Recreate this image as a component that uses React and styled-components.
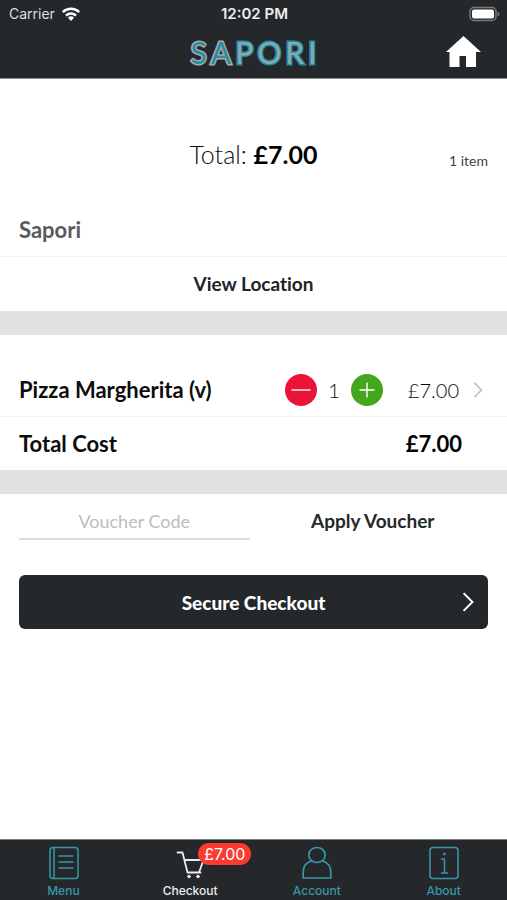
import React, { useState } from "react";
import styled, { createGlobalStyle } from "styled-components";

const ink = "#24282b";
const teal = "#3a95aa";

const GlobalStyle = createGlobalStyle`
  *, *::before, *::after { box-sizing: border-box; }
  body { margin: 0; background: #fff; }
  button, input { font: inherit; color: inherit; border: 0; background: none; padding: 0; margin: 0; }
  button { cursor: pointer; }
`;

const Screen = styled.div`
  min-height: 100vh;
  display: flex;
  flex-direction: column;
  background: #fff;
  color: #0c0c0c;
  font-family: Lato, "Open Sans", sans-serif;
  font-variant-ligatures: none;
`;

const Header = styled.header`
  background: ${ink};
  color: #fff;
  border-bottom: 1px solid #8f9193;
`;

const StatusBar = styled.div`
  display: grid;
  grid-template-columns: 1fr auto 1fr;
  align-items: center;
  height: 28px;
  padding: 0 7px 0 9px;
  font: 400 14px/16px Inter, sans-serif;
  color: #dedfe0;
`;

const Carrier = styled.div`
  display: flex;
  align-items: center;
  gap: 6px;
`;

const Clock = styled.time`
  font-size: 15px;
  font-weight: 600;
  color: #eee;
`;

const Battery = styled.svg`
  justify-self: end;
`;

const NavBar = styled.div`
  display: grid;
  grid-template-columns: 1fr auto 1fr;
  align-items: center;
  height: 50px;
  padding: 0 26px 4px;
`;

const Logo = styled.h1`
  grid-column: 2;
  display: flex;
  gap: 4px;
  margin: 0;
  padding-top: 2px;
  font: 400 30px/40px Lato, sans-serif;
  paint-order: stroke fill;
`;

const LogoLetter = styled.span`
  color: ${(p) => p.$fill};
  -webkit-text-stroke: 3px ${(p) => p.$edge};
`;

const HomeLink = styled.a`
  justify-self: end;
  display: flex;
  color: #fff;
`;

const Main = styled.main`
  flex: 1;
`;

const Summary = styled.section`
  display: grid;
  grid-template-columns: 1fr auto 1fr;
  align-items: center;
  padding: 56px 19px 0;
`;

const SummaryTotal = styled.p`
  grid-column: 2;
  margin: 0;
  font-size: 25px;
  line-height: 38px;
  font-weight: 300;
  strong { font-weight: 700; color: #000; }
`;

const ItemCount = styled.span`
  justify-self: end;
  padding-top: 14px;
  font-size: 14px;
  line-height: 20px;
  color: #444;
`;

const VenueName = styled.h2`
  margin: 0;
  padding: 42px 19px 11px;
  font-size: 22px;
  line-height: 30px;
  font-weight: 700;
  color: #5a5a5a;
  border-bottom: 1px solid #f1f1f1;
`;

const LocationButton = styled.button`
  display: block;
  width: 100%;
  height: 54px;
  padding-bottom: 2px;
  font-size: 19px;
  font-weight: 700;
  color: #202224;
`;

const Band = styled.div`
  height: 24px;
  background: #e1e1e3;
`;

const Order = styled.section`
  padding-top: 28px;
`;

const OrderRow = styled.div`
  display: flex;
  align-items: center;
  height: ${(p) => (p.$total ? "53px" : "54px")};
  padding-left: 19px;
  padding-right: ${(p) => (p.$total ? "45px" : "24px")};
  border-bottom: ${(p) => (p.$total ? "0" : "1px solid #f1f1f1")};
`;

const RowName = styled.span`
  flex: 1;
  font-size: 22px;
  font-weight: 700;
`;

const Stepper = styled.div`
  display: flex;
  align-items: center;
`;

const StepButton = styled.button`
  width: 32px;
  height: 32px;
  display: grid;
  place-items: center;
  border-radius: 50%;
  background: ${(p) => p.$color};
`;

const Quantity = styled.output`
  width: 34px;
  text-align: center;
  font-size: 20px;
  font-weight: 300;
`;

const RowPrice = styled.span`
  width: 76px;
  text-align: right;
  font-size: 20px;
  font-weight: 300;
`;

const DetailLink = styled.a`
  display: flex;
  margin-left: 14px;
  color: #c2c3c4;
`;

const RowTotal = styled.strong`
  font-size: 22px;
  font-weight: 700;
  color: #000;
`;

const VoucherForm = styled.form`
  display: flex;
  align-items: center;
  gap: 8px;
  padding: 9px 19px 0;
`;

const VoucherInput = styled.input`
  flex: 1;
  min-width: 0;
  height: 37px;
  border-bottom: 2px solid #dcddde;
  text-align: center;
  font-size: 18px;
  outline: none;
  &::placeholder { color: #bcbdbf; opacity: 1; }
`;

const ApplyButton = styled.button`
  flex: 1;
  height: 37px;
  padding-bottom: 2px;
  font-size: 19px;
  font-weight: 700;
  color: ${ink};
`;

const CheckoutButton = styled.button`
  display: grid;
  grid-template-columns: 1fr auto 1fr;
  align-items: center;
  width: calc(100% - 38px);
  height: 54px;
  margin: 35px 19px 24px;
  padding: 0 14px;
  border-radius: 6px;
  background: ${ink};
  color: #fff;
  font-size: 19px;
  font-weight: 900;
  span { grid-column: 2; }
  svg { justify-self: end; }
`;

const TabBar = styled.nav`
  display: grid;
  grid-template-columns: repeat(4, 1fr);
  height: 61px;
  background: ${ink};
  border-top: 1px solid #77797b;
`;

const Tab = styled.a`
  display: flex;
  flex-direction: column;
  align-items: center;
  padding-top: 6px;
  gap: 2px;
  color: ${(p) => (p.$active ? "#eceded" : teal)};
  font: 500 12px/18px Inter, sans-serif;
  text-decoration: none;
`;

const TabIcon = styled.span`
  position: relative;
  display: flex;
`;

const Badge = styled.span`
  position: absolute;
  left: 24px;
  top: -3px;
  padding: 0 6px;
  border-radius: 11px;
  background: #fb3b30;
  color: #fff;
  font: 400 16px/22px Inter, sans-serif;
`;

const lineProps = {
  fill: "none",
  stroke: "currentColor",
  strokeLinecap: "round",
  strokeLinejoin: "round",
  "aria-hidden": true,
};

const WifiIcon = () => (
  <svg width="20" height="14" viewBox="0 0 20 14" fill="none" stroke="#fff" strokeWidth="2.5" aria-hidden="true">
    <path d="M1.8 5.2a11.6 11.6 0 0 1 16.4 0M5 8.6a7.1 7.1 0 0 1 10 0" />
    <path d="M7 10.8a4.3 4.3 0 0 1 6 0L10 14z" fill="#fff" stroke="none" />
  </svg>
);

const BatteryIcon = () => (
  <Battery width="31" height="16" viewBox="0 0 31 16" aria-label="Battery full" role="img">
    <rect x="1" y="1.5" width="26" height="13" rx="4" fill="none" stroke="#77797b" strokeWidth="1.5" />
    <rect x="3" y="3.5" width="22" height="9" rx="2" fill="#fff" />
    <path d="M28.5 5.5q2 1 2 2.5t-2 2.5z" fill="#77797b" />
  </Battery>
);

const HomeIcon = () => (
  <svg width="35" height="31" viewBox="0 0 35 31" fill="currentColor" aria-hidden="true">
    <path d="M17.5 0 0 16h3.5v15h10V20h6.5v11h10V16H35z" />
  </svg>
);

const Chevron = ({ width, height, stroke }) => (
  <svg width={width} height={height} viewBox="0 0 10 18" {...lineProps} strokeWidth={stroke} strokeLinecap="butt" strokeLinejoin="miter">
    <path d="M1 1l8 8-8 8" />
  </svg>
);

const StepIcon = ({ plus }) => (
  <svg width="20" height="20" viewBox="0 0 20 20" fill="none" stroke="#fff" strokeWidth="1.4" aria-hidden="true">
    <path d={plus ? "M2.5 10h15M10 2.5v15" : "M0.5 10h19"} />
  </svg>
);

const MenuIcon = () => (
  <svg width="32" height="34" viewBox="0 0 32 34" {...lineProps} strokeWidth="1.5">
    <rect x="3" y="1.5" width="28" height="31" rx="3" />
    <path d="M7 2v30M12 10h14M12 16h14M12 22h14" />
  </svg>
);

const CartIcon = () => (
  <svg width="32" height="34" viewBox="0 0 32 34" {...lineProps} strokeWidth="1.8">
    <path d="M3.5 6.5h5l5 20h13M10.3 14h19.2l-4.5 12.5" />
    <circle cx="15" cy="30.5" r="1.3" fill="currentColor" strokeWidth="1" />
    <circle cx="24" cy="30.5" r="1.3" fill="currentColor" strokeWidth="1" />
  </svg>
);

const AccountIcon = () => (
  <svg width="32" height="34" viewBox="0 0 32 34" {...lineProps} strokeWidth="1.7">
    <ellipse cx="16" cy="9" rx="8.2" ry="7.5" />
    <path d="M10.5 14.7C5.5 16.5 2.2 20.5 2.2 26v6h27.6v-6c0-5.5-3.3-9.5-8.3-11.3" />
  </svg>
);

const AboutIcon = () => (
  <svg width="32" height="34" viewBox="0 0 32 34" {...lineProps} strokeWidth="1.5">
    <rect x="2" y="1.5" width="28" height="31" rx="3" />
    <path d="M13.5 13h3v14M13.5 27h6" />
    <circle cx="16.3" cy="8" r="1" fill="currentColor" strokeWidth="1" />
  </svg>
);

const UNIT_PRICE = 7;
const money = (n) => `£${n.toFixed(2)}`;

export default function App() {
  const [quantity, setQuantity] = useState(1);
  const [voucher, setVoucher] = useState("");
  const total = money(quantity * UNIT_PRICE);

  const tabs = [
    { label: "Menu", Icon: MenuIcon },
    { label: "Checkout", Icon: CartIcon, active: true, badge: total },
    { label: "Account", Icon: AccountIcon },
    { label: "About", Icon: AboutIcon },
  ];

  return (
    <Screen>
      <GlobalStyle />
      <Header>
        <StatusBar>
          <Carrier>Carrier <WifiIcon /></Carrier>
          <Clock>12:02 PM</Clock>
          <BatteryIcon />
        </StatusBar>
        <NavBar>
          <Logo aria-label="Sapori">
            {[..."SAPORI"].map((letter, i) => (
              <LogoLetter
                key={i}
                $fill={i < 2 ? "#278da3" : "#86a9b5"}
                $edge={i < 2 ? "#aaa9ab" : "#248ca2"}
              >
                {letter}
              </LogoLetter>
            ))}
          </Logo>
          <HomeLink href="#home" aria-label="Home"><HomeIcon /></HomeLink>
        </NavBar>
      </Header>

      <Main>
        <Summary>
          <SummaryTotal>Total: <strong>{total}</strong></SummaryTotal>
          <ItemCount>{quantity} {quantity === 1 ? "item" : "items"}</ItemCount>
        </Summary>
        <VenueName>Sapori</VenueName>
        <LocationButton type="button">View Location</LocationButton>
        <Band />
        <Order>
          <OrderRow>
            <RowName>Pizza Margherita (v)</RowName>
            <Stepper>
              <StepButton type="button" $color="#eb1438" aria-label="Remove one" onClick={() => setQuantity(Math.max(0, quantity - 1))}>
                <StepIcon />
              </StepButton>
              <Quantity>{quantity}</Quantity>
              <StepButton type="button" $color="#45a51b" aria-label="Add one" onClick={() => setQuantity(quantity + 1)}>
                <StepIcon plus />
              </StepButton>
            </Stepper>
            <RowPrice>{total}</RowPrice>
            <DetailLink href="#item" aria-label="Item details"><Chevron width="10" height="16" stroke="2" /></DetailLink>
          </OrderRow>
          <OrderRow $total>
            <RowName>Total Cost</RowName>
            <RowTotal>{total}</RowTotal>
          </OrderRow>
        </Order>
        <Band />
        <VoucherForm onSubmit={(e) => e.preventDefault()}>
          <VoucherInput aria-label="Voucher Code" placeholder="Voucher Code" value={voucher} onChange={(e) => setVoucher(e.target.value)} />
          <ApplyButton type="submit">Apply Voucher</ApplyButton>
        </VoucherForm>
        <CheckoutButton type="button">
          <span>Secure Checkout</span>
          <Chevron width="12" height="20" stroke="1.8" />
        </CheckoutButton>
      </Main>

      <TabBar>
        {tabs.map(({ label, Icon, active, badge }) => (
          <Tab key={label} href={`#${label.toLowerCase()}`} $active={active} aria-current={active ? "page" : undefined}>
            <TabIcon>
              <Icon />
              {badge && <Badge>{badge}</Badge>}
            </TabIcon>
            {label}
          </Tab>
        ))}
      </TabBar>
    </Screen>
  );
}
